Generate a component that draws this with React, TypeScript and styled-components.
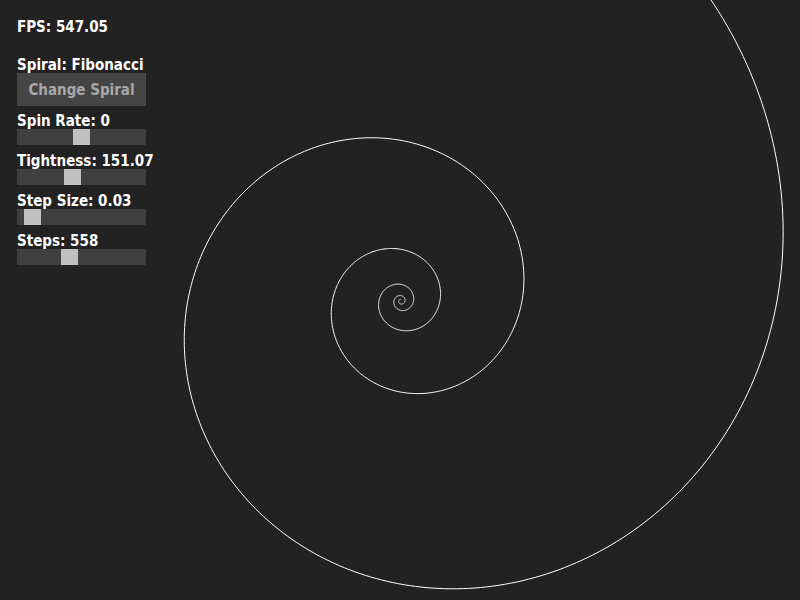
import React, { useMemo } from "react";
import styled, { createGlobalStyle } from "styled-components";

const Global = createGlobalStyle`
  html, body {
    margin: 0;
    padding: 0;
    background: #222222;
    overflow: hidden;
  }
  body {
    font-family: "DejaVu Sans Condensed", "DejaVu Sans", sans-serif;
  }
`;

const Stage = styled.div`
  position: relative;
  width: 800px;
  height: 600px;
  background: #222222;
  overflow: hidden;
`;

const Canvas = styled.svg`
  position: absolute;
  inset: 0;
  display: block;
`;

const Panel = styled.div`
  position: absolute;
  top: 19px;
  left: 17px;
  width: 129px;
  display: flex;
  flex-direction: column;
`;

const Label = styled.div<{ $gap?: number }>`
  font-family: "DejaVu Sans Condensed", "DejaVu Sans", sans-serif;
  font-stretch: condensed;
  font-weight: bold;
  font-size: 15px;
  line-height: 16px;
  color: #ffffff;
  white-space: nowrap;
  margin-top: ${(p) => p.$gap ?? 0}px;
`;

const Button = styled.button`
  width: 129px;
  height: 33px;
  margin: 0;
  padding: 0;
  border: none;
  background: #454545;
  color: #a8a8a8;
  font-family: "DejaVu Sans Condensed", "DejaVu Sans", sans-serif;
  font-stretch: condensed;
  font-weight: bold;
  font-size: 15px;
  cursor: pointer;
`;

const Track = styled.div`
  position: relative;
  width: 129px;
  height: 16px;
  background: #3f3f3f;
`;

const Thumb = styled.div`
  position: absolute;
  top: 0;
  width: 17px;
  height: 16px;
  background: #c0c0c0;
`;

type SliderProps = { label: string; pos: number; gap: number };

const Slider: React.FC<SliderProps> = ({ label, pos, gap }) => (
  <>
    <Label $gap={gap}>{label}</Label>
    <Track>
      <Thumb style={{ left: pos }} />
    </Track>
  </>
);

export default function App() {
  const d = useMemo(() => {
    const cx = 401;
    const cy = 301;
    const A = 376;
    const b = 0.1805;
    const pts: string[] = [];
    for (let t = -1.3; t <= 30; t += 0.02) {
      const r = A * Math.exp(-b * t);
      const x = cx + r * Math.cos(t);
      const y = cy + r * Math.sin(t);
      pts.push(`${x.toFixed(2)},${y.toFixed(2)}`);
    }
    return "M" + pts.join(" L");
  }, []);

  return (
    <Stage>
      <Global />
      <Canvas width={800} height={600} viewBox="0 0 800 600">
        <path d={d} fill="none" stroke="#ffffff" strokeWidth={1} />
      </Canvas>
      <Panel>
        <Label>FPS: 547.05</Label>
        <Label $gap={22}>Spiral: Fibonacci</Label>
        <Button>Change Spiral</Button>
        <Slider label="Spin Rate: 0" pos={56} gap={7} />
        <Slider label="Tightness: 151.07" pos={47} gap={8} />
        <Slider label="Step Size: 0.03" pos={7} gap={8} />
        <Slider label="Steps: 558" pos={44} gap={8} />
      </Panel>
    </Stage>
  );
}
